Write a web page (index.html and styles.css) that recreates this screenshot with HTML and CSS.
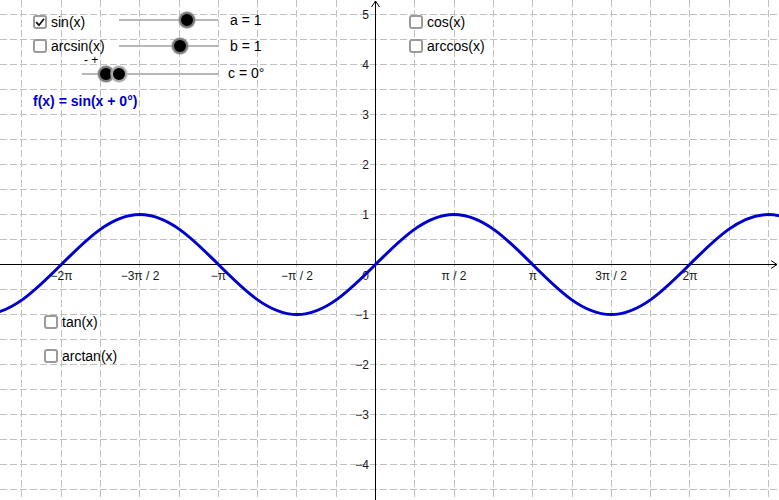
FILE: index.html
```
<!DOCTYPE html>
<html>
<head>
<meta charset="utf-8">
<link rel="stylesheet" href="styles.css">
</head>
<body>
<div class="view">
  <svg class="graph" width="779" height="500" viewBox="0 0 779 500" xmlns="http://www.w3.org/2000/svg">
    <g class="grid">
      <path d="M0 14H779M0 39H779M0 64H779M0 89H779M0 114H779M0 139H779M0 164H779M0 189H779M0 214H779M0 239H779M0 289H779M0 314H779M0 339H779M0 364H779M0 389H779M0 414H779M0 439H779M0 464H779M0 489H779"/>
      <path d="M21.8 0V500M61.1 0V500M100.4 0V500M139.7 0V500M179 0V500M218.3 0V500M257.6 0V500M296.9 0V500M336.2 0V500M414.8 0V500M454.1 0V500M493.4 0V500M532.7 0V500M572 0V500M611.3 0V500M650.6 0V500M689.9 0V500M729.2 0V500M768.5 0V500"/>
    </g>
    <g class="axes">
      <path d="M0 264.5H777M375.5 500V1"/>
      <path d="M771 260.5L777 264.5L771 268.5"/>
      <path d="M371.5 7L375.5 1L379.5 7"/>
    </g>
    <g class="labels">
      <text x="369" y="18.5" class="end">5</text>
      <text x="369" y="68.5" class="end">4</text>
      <text x="369" y="118.5" class="end">3</text>
      <text x="369" y="168.5" class="end">2</text>
      <text x="369" y="218.5" class="end">1</text>
      <text x="369" y="318.5" class="end">−1</text>
      <text x="369" y="368.5" class="end">−2</text>
      <text x="369" y="418.5" class="end">−3</text>
      <text x="369" y="468.5" class="end">−4</text>
      <text x="369" y="280" class="end">0</text>
      <text x="61.5" y="280" class="mid">−2π</text>
      <text x="140" y="280" class="mid">−3π / 2</text>
      <text x="218.5" y="280" class="mid">−π</text>
      <text x="297" y="280" class="mid">−π / 2</text>
      <text x="454" y="280" class="mid">π / 2</text>
      <text x="533" y="280" class="mid">π</text>
      <text x="611" y="280" class="mid">3π / 2</text>
      <text x="690" y="280" class="mid">2π</text>
    </g>
    <path class="curve" transform="translate(375.5 264.5)" d="M-392.7 50 c28.42,0 52.93,-24.39 78.54,-50 c25.61,-25.61 50.12,-50 78.54,-50 c28.42,0 52.93,24.39 78.54,50 c25.61,25.61 50.12,50 78.54,50 c28.42,0 52.93,-24.39 78.54,-50 c25.61,-25.61 50.12,-50 78.54,-50 c28.42,0 52.93,24.39 78.54,50 c25.61,25.61 50.12,50 78.54,50 c28.42,0 52.93,-24.39 78.54,-50 c25.61,-25.61 50.12,-50 78.54,-50 c28.42,0 52.93,24.39 78.54,50"/>
  </svg>

  <label class="check c-sin"><span class="box checked"><svg viewBox="0 0 12 12" width="11" height="11"><path d="M2 6.2L4.8 9.2L10.2 2.2"/></svg></span><span class="txt">sin(x)</span></label>
  <label class="check c-arcsin"><span class="box"></span><span class="txt">arcsin(x)</span></label>
  <label class="check c-cos"><span class="box"></span><span class="txt">cos(x)</span></label>
  <label class="check c-arccos"><span class="box"></span><span class="txt">arccos(x)</span></label>
  <label class="check c-tan"><span class="box"></span><span class="txt">tan(x)</span></label>
  <label class="check c-arctan"><span class="box"></span><span class="txt">arctan(x)</span></label>

  <div class="slider s-a"><span class="track"></span><span class="knob" style="left:67.5px"></span></div>
  <div class="slider s-b"><span class="track"></span><span class="knob" style="left:61px"></span></div>
  <div class="slider s-c"><span class="track"></span><span class="knob" style="left:24px"></span><span class="knob light" style="left:37px"></span><span class="pm">- +</span></div>

  <div class="val v-a">a = 1</div>
  <div class="val v-b">b = 1</div>
  <div class="val v-c">c = 0°</div>

  <div class="formula">f(x) = sin(x + 0°)</div>
</div>
</body>
</html>
```
FILE: styles.css
```
html, body {
  margin: 0;
  padding: 0;
  background: #fff;
}
body {
  font-family: "Liberation Sans", Arial, sans-serif;
  color: #000;
  overflow: hidden;
}
.view {
  position: relative;
  width: 779px;
  height: 500px;
  overflow: hidden;
}
.graph {
  position: absolute;
  left: 0;
  top: 0;
}
.grid path {
  stroke: #c0c0c0;
  stroke-width: 1;
  stroke-dasharray: 7 3;
  fill: none;
  shape-rendering: crispEdges;
}
.axes path {
  stroke: #000;
  stroke-width: 1;
  fill: none;
}
.labels text {
  font-family: "Liberation Sans", Arial, sans-serif;
  font-size: 12px;
  fill: #1a1a1a;
}
.labels .end { text-anchor: end; }
.labels .mid { text-anchor: middle; }
.curve {
  fill: none;
  stroke: #0000cc;
  stroke-width: 3;
  stroke-linecap: round;
}

.check {
  position: absolute;
  display: flex;
  align-items: center;
  gap: 4px;
  font-size: 14px;
  line-height: 16px;
  color: #000;
}
.box {
  box-sizing: border-box;
  width: 14px;
  height: 14px;
  border: 2px solid #9a9a9a;
  border-radius: 3px;
  background: #fff;
  display: flex;
  align-items: center;
  justify-content: center;
}
.box svg path {
  fill: none;
  stroke: #111;
  stroke-width: 2;
  stroke-linecap: square;
}
.c-sin { left: 33px; top: 14px; }
.c-arcsin { left: 33px; top: 38px; }
.c-cos { left: 409px; top: 14px; }
.c-arccos { left: 409px; top: 38px; }
.c-tan { left: 44px; top: 314px; }
.c-arctan { left: 44px; top: 348px; }

.slider {
  position: absolute;
  height: 16px;
}
.track {
  position: absolute;
  left: 0;
  right: 0;
  top: 7px;
  height: 2px;
  background: #b8b8b8;
}
.knob {
  position: absolute;
  top: 0;
  width: 16px;
  height: 16px;
  margin-left: -8px;
  box-sizing: border-box;
  border-radius: 50%;
  background: #000;
  border: 2px solid #7a7a7a;
  box-shadow: 0 0 0 1px rgba(160,160,160,0.6);
}
.knob.light {
  border-color: #a8a8a8;
  box-shadow: 0 0 0 1px rgba(200,200,200,0.6);
}
.s-a { left: 119px; top: 12px; width: 99px; }
.s-b { left: 119px; top: 38px; width: 99px; }
.s-c { left: 82px; top: 66px; width: 136px; }
.pm {
  position: absolute;
  left: 2px;
  top: -12px;
  font-size: 12px;
  line-height: 12px;
}

.val {
  position: absolute;
  font-size: 14px;
  line-height: 16px;
}
.v-a { left: 230px; top: 12px; }
.v-b { left: 230px; top: 38px; }
.v-c { left: 228px; top: 65px; }

.formula {
  position: absolute;
  left: 33px;
  top: 93px;
  font-size: 14px;
  line-height: 16px;
  font-weight: bold;
  color: #0000cc;
}
```
